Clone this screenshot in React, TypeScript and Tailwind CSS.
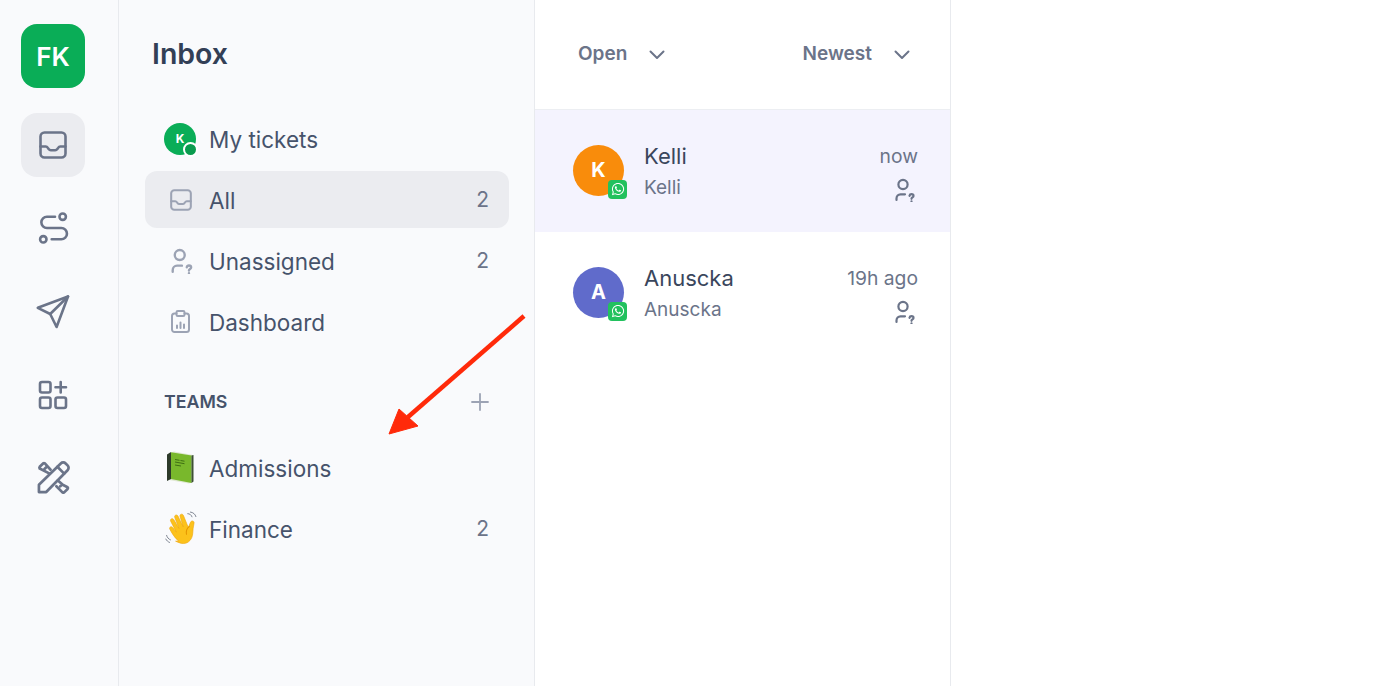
import React from "react";
import { FaWhatsapp } from "react-icons/fa";

const InboxIcon = ({ className }: { className: string }) => (
  <svg viewBox="0 0 28 28" fill="none" stroke="currentColor" strokeWidth="2.6" strokeLinecap="round" strokeLinejoin="round" className={className}>
    <rect x="1.5" y="1.5" width="25" height="25" rx="4" />
    <path d="M1.5 15.5h5.2c1 0 1.6.5 2.2 1.4l.7 1c.6.9 1.2 1.3 2.2 1.3h4.4c1 0 1.6-.4 2.2-1.3l.7-1c.6-.9 1.2-1.4 2.2-1.4h5.1" />
  </svg>
);

const UnassignedIcon = ({ className }: { className: string }) => (
  <svg viewBox="0 0 24 24" fill="none" stroke="currentColor" strokeWidth="2.2" strokeLinecap="round" strokeLinejoin="round" className={className}>
    <circle cx="9" cy="6.5" r="4.6" />
    <path d="M2.5 22v-1.5c0-2.4 1.7-4.2 4-4.2h4.5" />
    <path d="M15.5 17.8c.2-1 1-1.6 2-1.6 1.2 0 2 .7 2 1.7 0 1.5-2 1.5-2 2.9" />
    <path d="M17.5 23.3v.01" />
  </svg>
);

const ClipboardIcon = () => (
  <svg viewBox="0 0 19 23" fill="none" stroke="currentColor" strokeWidth="2" strokeLinecap="round" strokeLinejoin="round" className="ml-[7px] h-[23px] w-[19px] text-[#9ca3b4]">
    <path d="M5.5 3.5h-2A2.5 2.5 0 0 0 1 6v13.5A2.5 2.5 0 0 0 3.500 22h12a2.500 2.500 0 0 0 2.500-2.500V6a2.500 2.500 0 0 0-2.500-2.500h-2" />
    <rect x="5.5" y="1" width="8" height="5" rx="1.3" />
    <path d="M6 18v-2.500M9.500 18v-5.500M13 18v-3.500" />
  </svg>
);

const RouteIcon = () => (
  <svg viewBox="0 0 30 30" fill="none" stroke="currentColor" strokeWidth="2.6" strokeLinecap="round" strokeLinejoin="round" className="mt-[2px] h-[30px] w-[30px] overflow-visible text-[#6b7489]">
    <circle cx="24.7" cy="2.7" r="3.2" />
    <circle cx="5.3" cy="25.3" r="3.2" />
    <path d="M17 2.7H9a5.65 5.65 0 0 0 0 11.3h14.3a5.65 5.65 0 0 1 0 11.3h-9.6" />
  </svg>
);

const SendIcon = () => (
  <svg viewBox="0 0 34 34" fill="none" stroke="currentColor" strokeWidth="2.6" strokeLinecap="round" strokeLinejoin="round" className="mt-[2px] h-[34px] w-[34px] text-[#6b7489]">
    <path d="M32 1.500 1.800 12.800l12.400 6.200 6.400 13z" />
    <path d="M14.200 19 32 1.500" />
  </svg>
);

const AppsIcon = () => (
  <svg viewBox="0 0 30 30" fill="none" stroke="currentColor" strokeWidth="2.6" strokeLinecap="round" strokeLinejoin="round" className="mt-[2px] h-[30px] w-[30px] text-[#6b7489]">
    <rect x="2" y="2" width="10.5" height="10.5" rx="2" />
    <rect x="2" y="17.5" width="10.5" height="10.5" rx="2" />
    <rect x="17.5" y="17.5" width="10.5" height="10.5" rx="2" />
    <path d="M22.7 2v10.5M17.5 7.2H28" />
  </svg>
);

const ToolsIcon = () => (
  <svg viewBox="0 0 34 34" fill="none" stroke="currentColor" strokeWidth="2.8" strokeLinecap="round" strokeLinejoin="round" className="h-[33px] w-[33px] text-[#6b7489]">
    <path d="M2 32v-7.500L24.500 2.500a3.500 3.500 0 0 1 5 0l2 2a3.500 3.500 0 0 1 0 5L9.500 32z" />
    <path d="M21 6l7 7" />
    <path d="M13 13 2.800 7.800a1.500 1.500 0 0 1 0-1.800l3.500-3.500a1.500 1.500 0 0 1 1.800 0L14 9M9.500 6.500l-2 2" />
    <path d="M21.500 20l4.500 4-2 2M26.500 24.500l5 2.500a1.500 1.500 0 0 1 0 1.800l-3.500 3.500a1.500 1.500 0 0 1-1.800 0L20 26" />
  </svg>
);

const BookEmoji = () => (
  <svg viewBox="0 0 28 33" className="ml-[2px] h-[33px] w-[28px]">
    <path d="M3 2.500 8 .5l19 3.500v27l-4 1.500L3 29z" fill="#dfe8d2" />
    <path d="M1 3.500 5 1v27l-4 2z" fill="#2d3a2a" />
    <path d="M5 1.200 25.500 4.500V32L5 28z" fill="#79b82c" />
    <path d="M25.500 4.500 27.500 4v26.500l-2 1.500z" fill="#3d4f35" />
    <path d="M9 8.500l4.500.8M14.500 9.500l4 .7M9 11l9.500 1.700M9 14l6 1" stroke="#3f6f14" strokeWidth="1" fill="none" />
  </svg>
);

const WaveEmoji = () => (
  <svg viewBox="0 0 34 34" className="ml-[1px] h-[36px] w-[36px]">
    <path d="M13 28.500C9 25.500 6 20 4.500 17c-.8-1.700 1.500-3 2.700-1.500l3.500 4.500L5.300 9.500C4.500 7.600 7 6.300 8.200 8l5 8.500L9.200 6c-.7-2 1.900-3.100 3-1.300l5 10.300-3-10c-.5-2 2.200-2.800 3.100-1l4.700 11.500 2.200-5c1-2 3.800-1 3.200 1.200-.8 3-1 6.300-1.200 9.300-.3 5.500-4 9.700-8.700 9.700-2.600 0-4.500-.9-7.500-2.200z" fill="#fcc21b" stroke="#eea70f" strokeWidth=".6" />
    <path d="M23 14.500c-2 1.500-3.300 4.500-2.700 7.500" stroke="#e59600" strokeWidth="1" fill="none" strokeLinecap="round" />
    <path d="M21.500 2.500c2 .1 3.500 1.300 4 3M24 1c2.700.3 4.600 2 5.200 4.300M1.500 23c.5 2 1.800 3.500 3.700 4.300M.8 26.500c.7 1.500 2 2.600 3.500 3.200" stroke="#6b7280" strokeWidth=".8" fill="none" strokeLinecap="round" />
  </svg>
);

const Chevron = () => (
  <svg viewBox="0 0 16 10" fill="none" stroke="currentColor" strokeWidth="2" strokeLinecap="round" strokeLinejoin="round" className="h-[10px] w-[16px] text-[#6b7489]">
    <path d="M1.500 1.500 8 8l6.500-6.500" />
  </svg>
);

const RailTile = ({ children, active }: { children: React.ReactNode; active?: boolean }) => (
  <div className={`flex h-16 w-16 items-center justify-center rounded-2xl ${active ? "bg-[#ebecf0]" : ""}`}>{children}</div>
);

const NavRow = ({ icon, label, count, active }: { icon: React.ReactNode; label: string; count?: number; active?: boolean }) => (
  <div className={`flex h-[57px] items-center rounded-xl pl-[19px] pr-[20px] ${active ? "bg-[#ebecf0]" : ""}`}>
    <div className="flex w-[45px] shrink-0 items-center">{icon}</div>
    <span className="pt-[3px] text-[22.5px] font-normal text-[#46536b]">{label}</span>
    {count !== undefined && <span className="ml-auto text-[21px] text-[#6b7489]">{count}</span>}
  </div>
);

const Ticket = ({ initial, color, name, time, active }: { initial: string; color: string; name: string; time: string; active?: boolean }) => (
  <div className={`flex h-[122px] items-center pl-[38px] pr-[32px] ${active ? "bg-[#f4f3fe]" : "bg-white"}`}>
    <div className={`relative mb-[2px] flex h-[51px] w-[51px] shrink-0 items-center justify-center rounded-full text-[20px] font-bold text-white ${color}`}>
      {initial}
      <div className="absolute -bottom-[3px] -right-[3px] flex h-[19px] w-[19px] items-center justify-center rounded-[4px] bg-[#22c15e]">
        <FaWhatsapp className="h-[14px] w-[14px] text-white" />
      </div>
    </div>
    <div className="ml-[20px] flex-1 pt-[2px]">
      <div className="text-[22px] leading-[31px] text-[#3a465c]">{name}</div>
      <div className="text-[19px] leading-[31px] text-[#6b7489]">{name}</div>
    </div>
    <div className="flex flex-col items-end">
      <div className="text-[19.3px] leading-[30px] text-[#6b7489]">{time}</div>
      <UnassignedIcon className="mt-[7px] h-[24px] w-[24px] text-[#6b7489]" />
    </div>
  </div>
);

const App: React.FC = () => {
  return (
    <div className="relative flex h-[686px] w-[1396px] overflow-hidden bg-white font-[Inter,sans-serif]">
      <aside className="flex w-[119px] shrink-0 flex-col border-r border-[#e8eaee] bg-[#f9fafc] pl-[21px] pt-6">
        <div className="flex h-16 w-16 items-center justify-center rounded-2xl bg-[#0aad57] text-[26px] font-semibold text-white">FK</div>
        <div className="mt-[25px] flex flex-col gap-[19px]">
          <RailTile active><InboxIcon className="h-[28px] w-[28px] text-[#6b7489]" /></RailTile>
          <RailTile><RouteIcon /></RailTile>
          <RailTile><SendIcon /></RailTile>
          <RailTile><AppsIcon /></RailTile>
          <RailTile><ToolsIcon /></RailTile>
        </div>
      </aside>

      <nav className="w-[416px] shrink-0 border-r border-[#e8eaee] bg-[#f9fafc] pl-[26px] pr-[25px]">
        <h1 className="flex h-[108px] items-center pl-[7px] text-[28.5px] font-semibold text-[#323f56]">Inbox</h1>
        <div className="flex flex-col gap-[4px] pt-[2px]">
          <NavRow
            label="My tickets"
            icon={
              <div className="relative flex h-8 w-8 items-center justify-center rounded-full bg-[#0aad57] text-[12px] font-bold text-white">
                K
                <span className="absolute -bottom-[2px] -right-[2px] h-[15px] w-[15px] rounded-full border-2 border-white bg-[#0a9b4e]" />
              </div>
            }
          />
          <NavRow active label="All" count={2} icon={<InboxIcon className="ml-[6px] h-[22px] w-[22px] text-[#9ca3b4]" />} />
          <NavRow label="Unassigned" count={2} icon={<UnassignedIcon className="ml-[6px] h-[26px] w-[26px] text-[#9ca3b4]" />} />
          <NavRow label="Dashboard" icon={<ClipboardIcon />} />
        </div>
        <div className="mt-[32px] flex h-[40px] items-center pl-[19px] pr-[20px]">
          <span className="text-[17.8px] font-semibold text-[#46536b]">TEAMS</span>
          <svg viewBox="0 0 18 18" fill="none" stroke="currentColor" strokeWidth="1.8" strokeLinecap="round" className="ml-auto -mt-[1px] h-[18px] w-[18px] text-[#9ca3b4]">
            <path d="M9 1v16M1 9h16" />
          </svg>
        </div>
        <div className="mt-[17px] flex flex-col gap-[4px]">
          <NavRow label="Admissions" icon={<BookEmoji />} />
          <NavRow label="Finance" count={2} icon={<WaveEmoji />} />
        </div>
      </nav>

      <section className="w-[416px] shrink-0 border-r border-[#e8eaee] bg-white">
        <div className="flex h-[110px] items-center justify-between border-b border-[#eceef2] pl-[43px] pr-[40px]">
          <div className="flex items-center gap-[22px] text-[19px] font-semibold text-[#6b7489]">
            Open <Chevron />
          </div>
          <div className="flex items-center gap-[22px] text-[19px] font-semibold text-[#6b7489]">
            Newest <Chevron />
          </div>
        </div>
        <Ticket active initial="K" color="bg-[#f98c0b]" name="Kelli" time="now" />
        <Ticket initial="A" color="bg-[#606bcb]" name="Anuscka" time="19h ago" />
      </section>

      <svg viewBox="0 0 140 125" className="absolute left-[388px] top-[312px] h-[125px] w-[140px]">
        <path d="M136 4 20 105" stroke="#ff2a0a" strokeWidth="4.5" fill="none" />
        <path d="M1 122 11 97l19 17z" fill="#ff2a0a" stroke="#ff2a0a" strokeWidth="1" />
      </svg>
    </div>
  );
};

export default App;
